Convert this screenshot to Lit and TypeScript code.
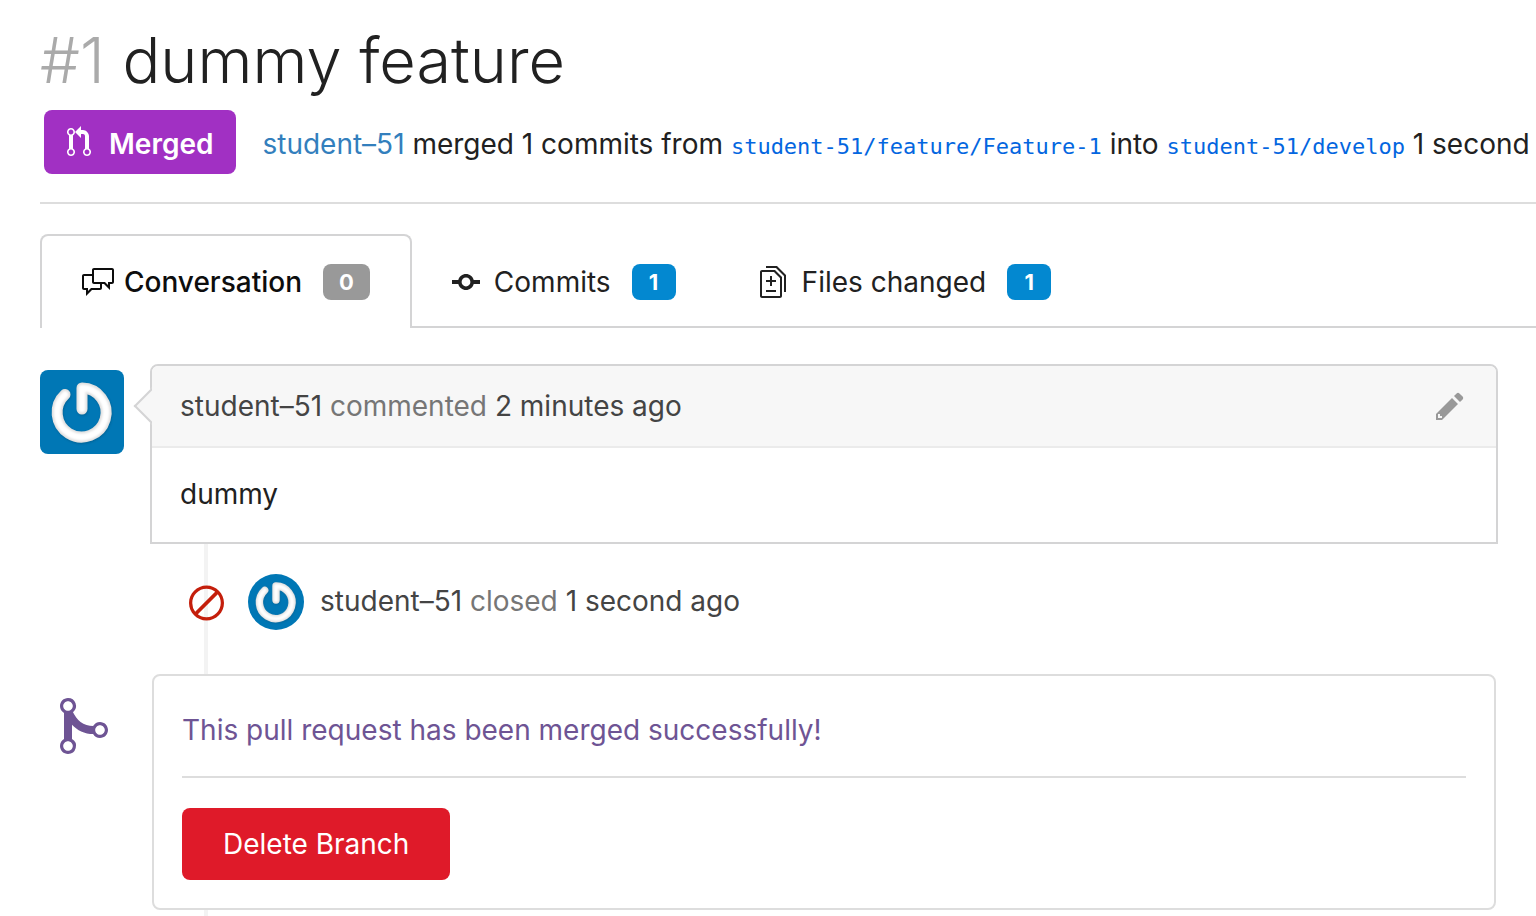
import { LitElement, html, css, svg } from "lit";
import { customElement, property } from "lit/decorators.js";

const ICONS: Record<string, { w: number; d: string }> = {
  pull: {
    w: 12,
    d: "M11 11.28V5c-.03-.78-.34-1.47-.94-2.06C9.46 2.35 8.78 2.03 8 2H7V0L4 3l3 3V4h1c.27.02.48.11.69.31.21.2.3.42.31.69v6.28A1.993 1.993 0 0 0 10 15a1.993 1.993 0 0 0 1-3.72zm-1 2.92c-.66 0-1.2-.55-1.2-1.2 0-.65.55-1.2 1.2-1.2.65 0 1.2.55 1.2 1.2 0 .65-.55 1.2-1.2 1.2zM4 3c0-1.11-.89-2-2-2a1.993 1.993 0 0 0-1 3.72v6.56A1.993 1.993 0 0 0 2 15a1.993 1.993 0 0 0 1-3.72V4.72c.59-.34 1-.98 1-1.72zm-.8 10c0 .66-.55 1.2-1.2 1.2-.65 0-1.2-.55-1.2-1.2 0-.65.55-1.2 1.2-1.2.65 0 1.2.55 1.2 1.2zM2 4.2C1.34 4.2.8 3.65.8 3c0-.65.55-1.2 1.2-1.2.65 0 1.2.55 1.2 1.2 0 .65-.55 1.2-1.2 1.2z",
  },
  discussion: {
    w: 16,
    d: "M15 1H6c-.55 0-1 .45-1 1v2H1c-.55 0-1 .45-1 1v6c0 .55.45 1 1 1h1v3l3-3h4c.55 0 1-.45 1-1V9h1l3 3V9h1c.55 0 1-.45 1-1V2c0-.55-.45-1-1-1zM9 11H4.5L3 12.5V11H1V5h4v3c0 .55.45 1 1 1h3v2zm6-3h-2v1.5L11.5 8H6V2h9v6z",
  },
  commit: {
    w: 14,
    d: "M10.86 7c-.45-1.72-2-3-3.86-3-1.86 0-3.41 1.28-3.86 3H0v2h3.14c.45 1.72 2 3 3.86 3 1.86 0 3.41-1.28 3.86-3H14V7h-3.14zM7 10.2c-1.22 0-2.2-.98-2.2-2.2 0-1.22.98-2.2 2.2-2.2 1.22 0 2.2.98 2.2 2.2 0 1.22-.98 2.2-2.2 2.2z",
  },
  diff: {
    w: 13,
    d: "M6 7h2v1H6v2H5V8H3V7h2V5h1v2zm-3 6h5v-1H3v1zM7.5 2 11 5.5V15c0 .55-.45 1-1 1H1c-.55 0-1-.45-1-1V3c0-.55.45-1 1-1h6.5zM10 6 7 3H1v12h9V6zM8.5 0H3v1h5l4 4v8h1V4.5L8.5 0z",
  },
  slash: {
    w: 14,
    d: "M7 1C3.14 1 0 4.14 0 8s3.14 7 7 7 7-3.14 7-7-3.14-7-7-7zm0 1.3c1.3 0 2.5.44 3.47 1.17l-8 8A5.75 5.75 0 0 1 1.3 8c0-3.14 2.56-5.7 5.7-5.7zm0 11.41c-1.3 0-2.5-.44-3.47-1.17l8-8c.73.97 1.17 2.17 1.17 3.47 0 3.14-2.56 5.7-5.7 5.7z",
  },
  pencil: {
    w: 14,
    d: "M0 12v3h3l8-8-3-3-8 8zm3 2H1v-2h1v1h1v1zm10.3-9.3L12 6 9 3l1.3-1.3a.996.996 0 0 1 1.41 0l1.59 1.59c.39.39.39 1.02 0 1.41z",
  },
  merge: {
    w: 12,
    d: "M10 7c-.73 0-1.38.41-1.73 1.02V8C7.22 7.98 6 7.64 5.14 6.98c-.75-.58-1.5-1.61-1.89-2.44A1.993 1.993 0 0 0 2 .99C.89.99 0 1.89 0 3a2 2 0 0 0 1 1.72v6.56c-.59.35-1 .99-1 1.72 0 1.11.89 2 2 2a1.993 1.993 0 0 0 1-3.72V7.67c.67.7 1.44 1.27 2.3 1.69.86.42 2.03.63 2.97.64v-.02c.36.61 1 1.02 1.73 1.02 1.11 0 2-.89 2-2 0-1.11-.89-2-2-2zm-6.8 6c0 .66-.55 1.2-1.2 1.2-.65 0-1.2-.55-1.2-1.2 0-.65.55-1.2 1.2-1.2.65 0 1.2.55 1.2 1.2zM2 4.2C1.34 4.2.8 3.65.8 3c0-.65.55-1.2 1.2-1.2.65 0 1.2.55 1.2 1.2 0 .65-.55 1.2-1.2 1.2zm8 6c-.66 0-1.2-.55-1.2-1.2 0-.65.55-1.2 1.2-1.2.65 0 1.2.55 1.2 1.2 0 .65-.55 1.2-1.2 1.2z",
  },
};

@customElement("oct-icon")
class OctIcon extends LitElement {
  @property() name = "";
  @property({ type: Number }) size = 32;

  static styles = css`
    :host { display: block; flex: none; line-height: 0; }
    svg { display: block; fill: currentColor; }
  `;

  render() {
    const icon = ICONS[this.name];
    return html`<svg
      aria-hidden="true"
      width=${(this.size * icon.w) / 16}
      height=${this.size}
      viewBox="0 0 ${icon.w} 16"
    >${svg`<path fill-rule="evenodd" d=${icon.d}></path>`}</svg>`;
  }
}

@customElement("user-avatar")
class UserAvatar extends LitElement {
  static styles = css`
    :host { display: block; flex: none; overflow: hidden; background: #0077b5; }
    svg { display: block; width: 100%; height: 100%; }
  `;

  render() {
    const ring = "M42 39V18A24.5 24.5 0 1 1 25 24.5";
    return html`<svg viewBox="0 0 84 84" role="img" aria-label="student-51">
      <defs>
        <filter id="soft" x="-20%" y="-20%" width="140%" height="140%">
          <feGaussianBlur stdDeviation="1.2"></feGaussianBlur>
        </filter>
      </defs>
      <g fill="none" stroke-linecap="round" stroke-linejoin="round">
        <path d=${ring} stroke="#00527f" stroke-opacity=".6" stroke-width="11" transform="translate(0.5 1)" filter="url(#soft)"></path>
        <path d=${ring} stroke="#dedede" stroke-width="11"></path>
        <path d=${ring} stroke="#fff" stroke-width="7" filter="url(#soft)"></path>
      </g>
    </svg>`;
  }
}

@customElement("app-root")
class AppRoot extends LitElement {
  static styles = css`
    :host {
      display: block;
      overflow: hidden;
      background: #fff;
      color: #212121;
      font: 400 28px/40px Inter, "Liberation Sans", sans-serif;
    }
    * { box-sizing: border-box; }
    a { color: inherit; text-decoration: none; }
    h1, p { margin: 0; font-weight: 400; }

    .top { padding: 20px 0 0 40px; }
    .title { font-size: 63px; line-height: 80px; font-weight: 300; white-space: nowrap; }
    .index { color: #aaa; }
    .summary {
      display: flex;
      align-items: center;
      gap: 26px;
      padding: 10px 0 28px 4px;
      white-space: nowrap;
      border-bottom: 2px solid #ddd;
    }
    .state {
      display: flex;
      align-items: center;
      gap: 18px;
      height: 64px;
      padding: 0 23px;
      border-radius: 8px;
      background: #a130c3;
      color: #fff;
      font-weight: 600;
    }
    .summary p, .state span { padding-top: 4px; }
    .user { color: #337fbd; }
    code { font: 22px "DejaVu Sans Mono", monospace; color: #0366e0; }

    .tabs { display: flex; margin: 30px 0 0 40px; border-bottom: 2px solid #d4d4d5; }
    .tab {
      display: flex;
      align-items: center;
      height: 92px;
      padding: 4px 44px 0 40px;
      white-space: nowrap;
    }
    .tab.active {
      height: 94px;
      margin-bottom: -2px;
      padding: 0 40px;
      border: 2px solid #d4d4d5;
      border-bottom: 0;
      border-radius: 8px 8px 0 0;
      background: #fff;
      color: #0d0d0d;
      font-weight: 500;
    }
    .glyph { width: 42px; }
    .count {
      min-width: 44px;
      margin-left: 21px;
      padding: 0 16px;
      border-radius: 8px;
      background: #0388d0;
      color: #fff;
      font-size: 22px;
      line-height: 36px;
      font-weight: 700;
      text-align: center;
    }
    .active .count { background: #999; }

    .feed { padding: 36px 38px 0 40px; }
    .row { display: grid; grid-template-columns: 110px minmax(0, 1fr); }
    .avatar { width: 84px; height: 84px; margin-top: 6px; border-radius: 8px; }
    .comment { position: relative; border: 2px solid #d4d4d5; border-radius: 8px 8px 0 0; }
    .comment::before {
      content: "";
      position: absolute;
      top: 27px;
      left: -13px;
      width: 24px;
      height: 24px;
      background: #f7f7f7;
      border: solid #d4d4d5;
      border-width: 0 0 2px 2px;
      transform: rotate(45deg);
    }
    .head {
      position: relative;
      display: flex;
      align-items: center;
      justify-content: space-between;
      height: 82px;
      padding: 0 32px 0 28px;
      border-bottom: 2px solid #ebebeb;
      border-radius: 6px 6px 0 0;
      background: #f7f7f7;
      color: #444;
    }
    .muted { color: #767676; }
    .edit { padding: 0; border: 0; background: none; color: #999; cursor: pointer; }
    .body { padding: 26px 28px 28px; }

    .track {
      margin-left: 110px;
      background: linear-gradient(#f3f3f3, #f3f3f3) 54px 0 / 4px 100% no-repeat;
    }
    .event {
      display: flex;
      align-items: center;
      padding: 30px 0 44px 39px;
      color: #444;
    }
    .event oct-icon { padding-top: 2px; color: #c41e0b; }
    .event span { padding-bottom: 2px; }
    .small { width: 56px; height: 56px; margin: 0 16px 0 24px; border-radius: 50%; }
    .merge-mark { padding: 20px 0 0 20px; color: #6e5494; }
    .panel {
      margin: 0 2px;
      padding: 34px 28px 28px;
      border: 2px solid #ddd;
      border-radius: 8px;
    }
    .ok { padding-bottom: 26px; border-bottom: 2px solid #ddd; color: #6e5494; }
    .delete {
      display: block;
      height: 72px;
      margin-top: 30px;
      padding: 0 41px;
      border: 0;
      border-radius: 8px;
      background: #df1a29;
      color: #fff;
      font: inherit;
      cursor: pointer;
    }
    .tail { height: 6px; }
  `;

  private tab(icon: string, label: string, count: number, active = false) {
    return html`<a class="tab ${active ? "active" : ""}" href="#${icon}">
      <span class="glyph"><oct-icon name=${icon}></oct-icon></span>
      <span>${label}</span>
      <span class="count">${count}</span>
    </a>`;
  }

  render() {
    return html`
      <header class="top">
        <h1 class="title"><span class="index">#1</span> dummy feature</h1>
        <div class="summary">
          <div class="state"><oct-icon name="pull"></oct-icon><span>Merged</span></div>
          <p>
            <a class="user" href="#user">student–51</a> merged 1 commits from
            <code>student-51/feature/Feature-1</code> into
            <code>student-51/develop</code> 1 second
          </p>
        </div>
      </header>
      <nav class="tabs">
        ${this.tab("discussion", "Conversation", 0, true)}
        ${this.tab("commit", "Commits", 1)}
        ${this.tab("diff", "Files changed", 1)}
      </nav>
      <main class="feed">
        <div class="row">
          <user-avatar class="avatar"></user-avatar>
          <article class="comment">
            <div class="head">
              <span><a href="#user">student–51</a> <span class="muted">commented</span> 2 minutes ago</span>
              <button class="edit" aria-label="Edit"><oct-icon name="pencil"></oct-icon></button>
            </div>
            <p class="body">dummy</p>
          </article>
        </div>
        <div class="track">
          <div class="event">
            <oct-icon name="slash" size="40"></oct-icon>
            <user-avatar class="small"></user-avatar>
            <span><a href="#user">student–51</a> <span class="muted">closed</span> 1 second ago</span>
          </div>
        </div>
        <div class="row">
          <div class="merge-mark"><oct-icon name="merge" size="64"></oct-icon></div>
          <section class="panel">
            <p class="ok">This pull request has been merged successfully!</p>
            <button class="delete">Delete Branch</button>
          </section>
        </div>
        <div class="track tail"></div>
      </main>
    `;
  }
}
